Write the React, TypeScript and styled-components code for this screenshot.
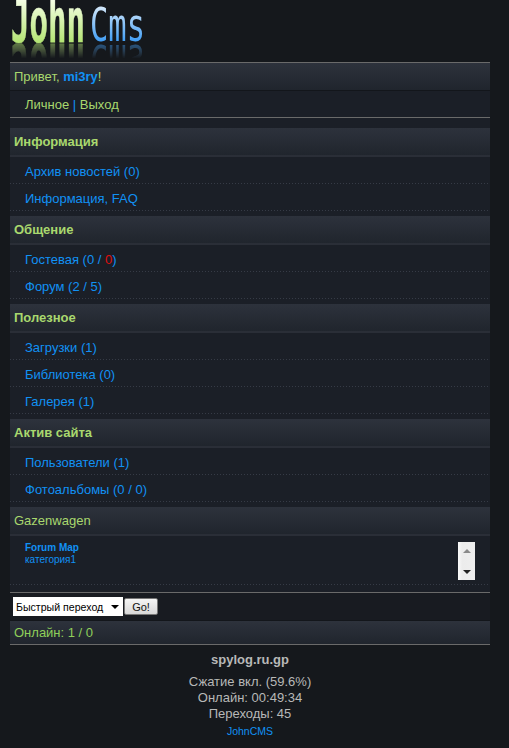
import React from 'react';
import styled, { createGlobalStyle } from 'styled-components';

const GlobalStyle = createGlobalStyle`
  html, body {
    margin: 0;
    padding: 0;
    background: #15181c;
  }
  body {
    font-family: "Liberation Sans", Arial, sans-serif;
    font-size: 13px;
    color: #c0c0c0;
  }
`;

const Page = styled.div`
  width: 509px;
  height: 748px;
  overflow: hidden;
  background: #15181c;
`;

const LogoBar = styled.div`
  height: 62px;
`;

const LogoSvg = styled.svg`
  display: block;
  -webkit-box-reflect: below 0 linear-gradient(to top, rgba(255, 255, 255, 0.5), transparent 36%);
`;

const Wrap = styled.div`
  margin: 0 19px 0 10px;
  background: #1b1f27;
`;

const Header = styled.div`
  height: 29px;
  box-sizing: border-box;
  padding: 0 4px;
  display: flex;
  align-items: center;
  background: linear-gradient(#2d323c, #20252d);
  border-bottom: 2px solid #2a2e37;
  color: #a9d86e;
`;

const Greeting = styled(Header)`
  border-top: 1px solid #6a6a6a;
  border-bottom: 1px solid #13161b;
`;

const GroupTitle = styled(Header)`
  font-weight: bold;
`;

const Row = styled.div`
  height: 27px;
  box-sizing: border-box;
  padding: 1px 15px 0;
  display: flex;
  align-items: center;
  color: #1191f4;
  background: repeating-linear-gradient(90deg, #363b46 0 1px, transparent 1px 3px) bottom / 100% 1px no-repeat;
`;

const Section = styled.section`
  padding-bottom: 5px;
`;

const Red = styled.span`
  color: #e01010;
`;

const Green = styled.span`
  color: #a9d86e;
`;

const UserLink = styled.b`
  color: #1191f4;
`;

const Menu = styled.div`
  height: 27px;
  box-sizing: border-box;
  padding: 0 15px;
  display: flex;
  align-items: center;
  color: #1191f4;
  white-space: pre;
  border-bottom: 1px solid #6a6a6a;
  margin-bottom: 10px;
`;

const WidgetBody = styled(Row)`
  height: 49px;
  justify-content: space-between;
  align-items: flex-start;
  padding-top: 6px;
`;

const WidgetText = styled.div`
  font-size: 10px;
  line-height: 12px;
`;

const WidgetTitle = styled.b`
  display: block;
`;

const Scrollbar = styled.div`
  width: 17px;
  height: 38px;
  box-sizing: border-box;
  padding: 7px 0 6px;
  display: flex;
  flex-direction: column;
  justify-content: space-between;
  align-items: center;
  background: linear-gradient(90deg, #fafafa, #ececec 25%, #eeeeee);
`;

const Arrow = styled.span<{ $up?: boolean }>`
  width: 0;
  height: 0;
  border-left: 4px solid transparent;
  border-right: 4px solid transparent;
  ${(p) => (p.$up ? 'border-bottom: 4px solid #8a8a8a;' : 'border-top: 4px solid #222;')}
`;

const JumpForm = styled.div`
  height: 29px;
  box-sizing: border-box;
  margin-top: 7px;
  padding: 0 3px;
  display: flex;
  align-items: center;
  gap: 1px;
  background: #181b21;
  border-top: 1px solid #6a6a6a;
  border-bottom: 1px solid #13161b;
`;

const FakeSelect = styled.div`
  width: 110px;
  height: 19px;
  box-sizing: border-box;
  padding: 0 4px 0 3px;
  display: flex;
  align-items: center;
  justify-content: space-between;
  background: #fff;
  color: #000;
  font-size: 10.6px;
  white-space: nowrap;
`;

const SelectArrow = styled.span`
  width: 0;
  height: 0;
  border-left: 4px solid transparent;
  border-right: 4px solid transparent;
  border-top: 4px solid #000;
`;

const GoButton = styled.button`
  width: 34px;
  height: 17px;
  padding: 0;
  font-family: "Liberation Sans", Arial, sans-serif;
  font-size: 11px;
  color: #111;
  background: linear-gradient(#f5f5f5, #d8d8d8);
  border: 1px solid #777;
  border-radius: 2px;
`;

const OnlineBar = styled(Header)`
  height: 24px;
  border-bottom: 1px solid #6a6a6a;
  color: #8fcf5a;
`;

const Footer = styled.footer`
  margin: 0 19px 0 10px;
  padding-top: 7px;
  text-align: center;
  color: #b8b8b8;
  line-height: 16px;
`;

const SiteName = styled.div`
  font-weight: bold;
  margin-bottom: 6px;
`;

const Copyright = styled.a`
  display: block;
  margin-top: 1px;
  font-size: 10.5px;
  color: #1191f4;
`;

const Logo = () => (
  <LogoSvg width="160" height="43" viewBox="0 0 160 43">
    <defs>
      <linearGradient id="green" gradientUnits="userSpaceOnUse" x1="0" y1="0" x2="0" y2="42">
        <stop offset="0" stopColor="#f6ffe6" />
        <stop offset="1" stopColor="#b4e474" />
      </linearGradient>
      <linearGradient id="blue" gradientUnits="userSpaceOnUse" x1="0" y1="6" x2="0" y2="42">
        <stop offset="0" stopColor="#d6e9fa" />
        <stop offset="1" stopColor="#3d9cf5" />
      </linearGradient>
    </defs>
    <g fontFamily="'DejaVu Sans Mono', monospace">
      <text x="11" y="42" fontSize="60" fontWeight="bold" fill="url(#green)" stroke="url(#green)" strokeWidth="0.6" textLength="74" lengthAdjust="spacingAndGlyphs">John</text>
      <text x="90" y="41" fontSize="46" fill="url(#blue)" textLength="55" lengthAdjust="spacingAndGlyphs">Cms</text>
    </g>
  </LogoSvg>
);

const sections = [
  { title: 'Информация', rows: [<>Архив новостей (0)</>, <>Информация, FAQ</>] },
  { title: 'Общение', rows: [<>Гостевая (0 / <Red>0</Red>)</>, <>Форум (2 / 5)</>] },
  { title: 'Полезное', rows: [<>Загрузки (1)</>, <>Библиотека (0)</>, <>Галерея (1)</>] },
  { title: 'Актив сайта', rows: [<>Пользователи (1)</>, <>Фотоальбомы (0 / 0)</>] },
];

const App = () => (
  <Page>
    <GlobalStyle />
    <LogoBar>
      <Logo />
    </LogoBar>
    <Wrap>
      <Greeting>
        <Green>Привет,&nbsp;</Green>
        <UserLink>mi3ry</UserLink>
        <Green>!</Green>
      </Greeting>
      <Menu>
        <Green>Личное</Green> | <Green>Выход</Green>
      </Menu>
      {sections.map((section) => (
        <Section key={section.title}>
          <GroupTitle>{section.title}</GroupTitle>
          {section.rows.map((row, i) => (
            <Row key={i}>
              <span>{row}</span>
            </Row>
          ))}
        </Section>
      ))}
      <Header>Gazenwagen</Header>
      <WidgetBody>
        <WidgetText>
          <WidgetTitle>Forum Map</WidgetTitle>
          категория1
        </WidgetText>
        <Scrollbar>
          <Arrow $up />
          <Arrow />
        </Scrollbar>
      </WidgetBody>
      <JumpForm>
        <FakeSelect>
          Быстрый переход
          <SelectArrow />
        </FakeSelect>
        <GoButton>Go!</GoButton>
      </JumpForm>
      <OnlineBar>Онлайн: 1 / 0</OnlineBar>
    </Wrap>
    <Footer>
      <SiteName>spylog.ru.gp</SiteName>
      Сжатие вкл. (59.6%)
      <br />
      Онлайн: 00:49:34
      <br />
      Переходы: 45
      <Copyright>JohnCMS</Copyright>
    </Footer>
  </Page>
);

export default App;
